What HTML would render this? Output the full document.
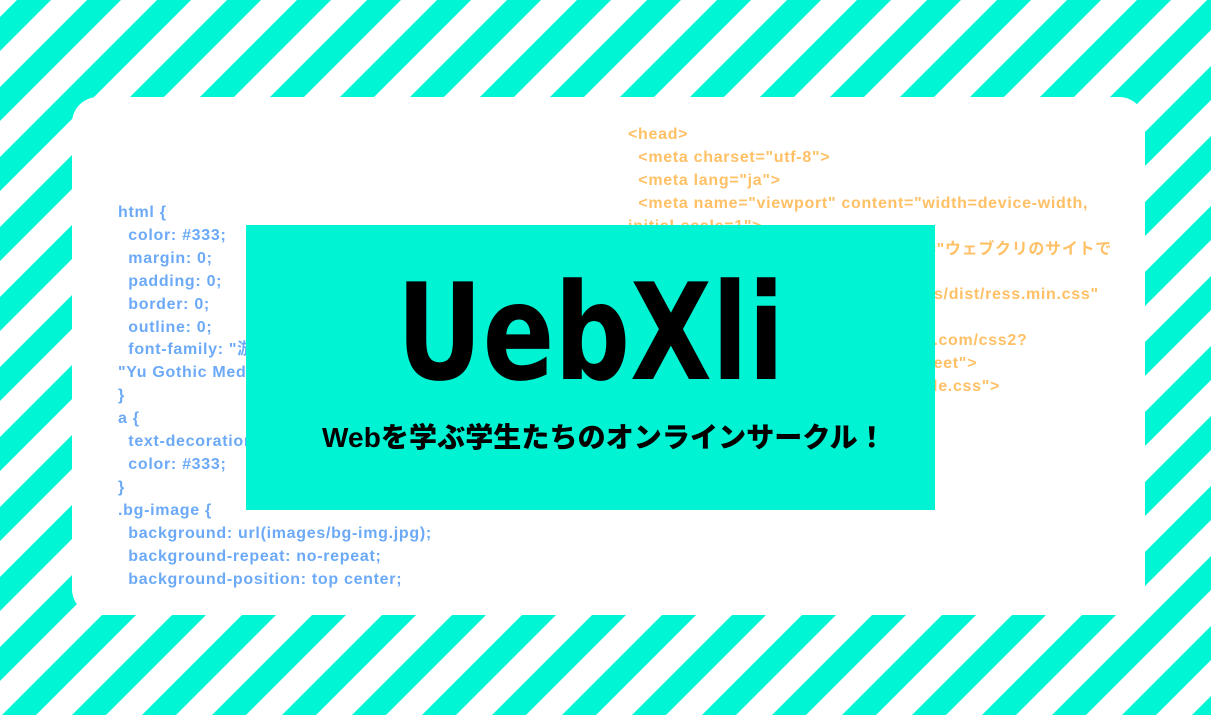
<!DOCTYPE html>
<html><head><meta charset="utf-8"><style>
html,body{margin:0;padding:0;width:1211px;height:715px;overflow:hidden;background:#fff;position:relative}
svg.bg{position:absolute;left:0;top:0}
.card{position:absolute;left:72px;top:97px;width:1073px;height:518px;background:#fff;border-radius:26px}
.code{position:absolute;font-family:"Liberation Sans","Noto Sans CJK JP",sans-serif;font-weight:bold;font-size:16px;letter-spacing:0.7px;line-height:22.9px;white-space:pre}
.blue{left:118px;top:202px;color:#6caaf7}
.orange{left:628px;top:124px;color:#ffc066}
.box{position:absolute;left:246px;top:225px;width:689px;height:285px;background:#00f3d3}
.title{position:absolute;left:0;width:689px;top:30px;text-align:center;font-family:"DejaVu Sans",sans-serif;font-weight:bold;font-size:134px;color:#000;transform:scaleX(0.79)}
.sub{position:absolute;left:76px;top:191px;font-family:"Liberation Sans","Noto Sans CJK JP",sans-serif;font-weight:900;font-size:28px;color:#000;white-space:nowrap;letter-spacing:0.1px}
</style></head><body>
<svg class="bg" width="1211" height="715"><defs><pattern id="p" width="70" height="70" patternUnits="userSpaceOnUse"><polygon points="17,0 51,0 0,51 0,17" fill="#00f5d4"/><polygon points="70,17 70,51 51,70 17,70" fill="#00f5d4"/></pattern></defs><rect width="1211" height="715" fill="url(#p)"/></svg>
<div class="card"></div>
<div class="code blue">html {
  color: #333;
  margin: 0;
  padding: 0;
  border: 0;
  outline: 0;
  font-family: "游ゴシック体", YuGothic,
"Yu Gothic Medium", sans-serif;
}
a {
  text-decoration: none;
  color: #333;
}
.bg-image {
  background: url(images/bg-img.jpg);
  background-repeat: no-repeat;
  background-position: top center;</div>
<div class="code orange">&lt;head&gt;
  &lt;meta charset="utf-8"&gt;
  &lt;meta lang="ja"&gt;
  &lt;meta name="viewport" content="width=device-width,
initial-scale=1"&gt;
  &lt;meta name="description" content="ウェブクリのサイトで
  
  &lt;link rel="stylesheet" href="css/ress/dist/ress.min.css"
  
  &lt;link href="https://fonts.googleapis.com/css2?
  family=Noto+Sans+JP" rel="stylesheet"&gt;
  &lt;link rel="stylesheet" href="css/style.css"&gt;</div>
<div class="box">
<div class="title">UebXli</div>
<div class="sub">Webを学ぶ学生たちのオンラインサークル！</div>
</div>
</body></html>
